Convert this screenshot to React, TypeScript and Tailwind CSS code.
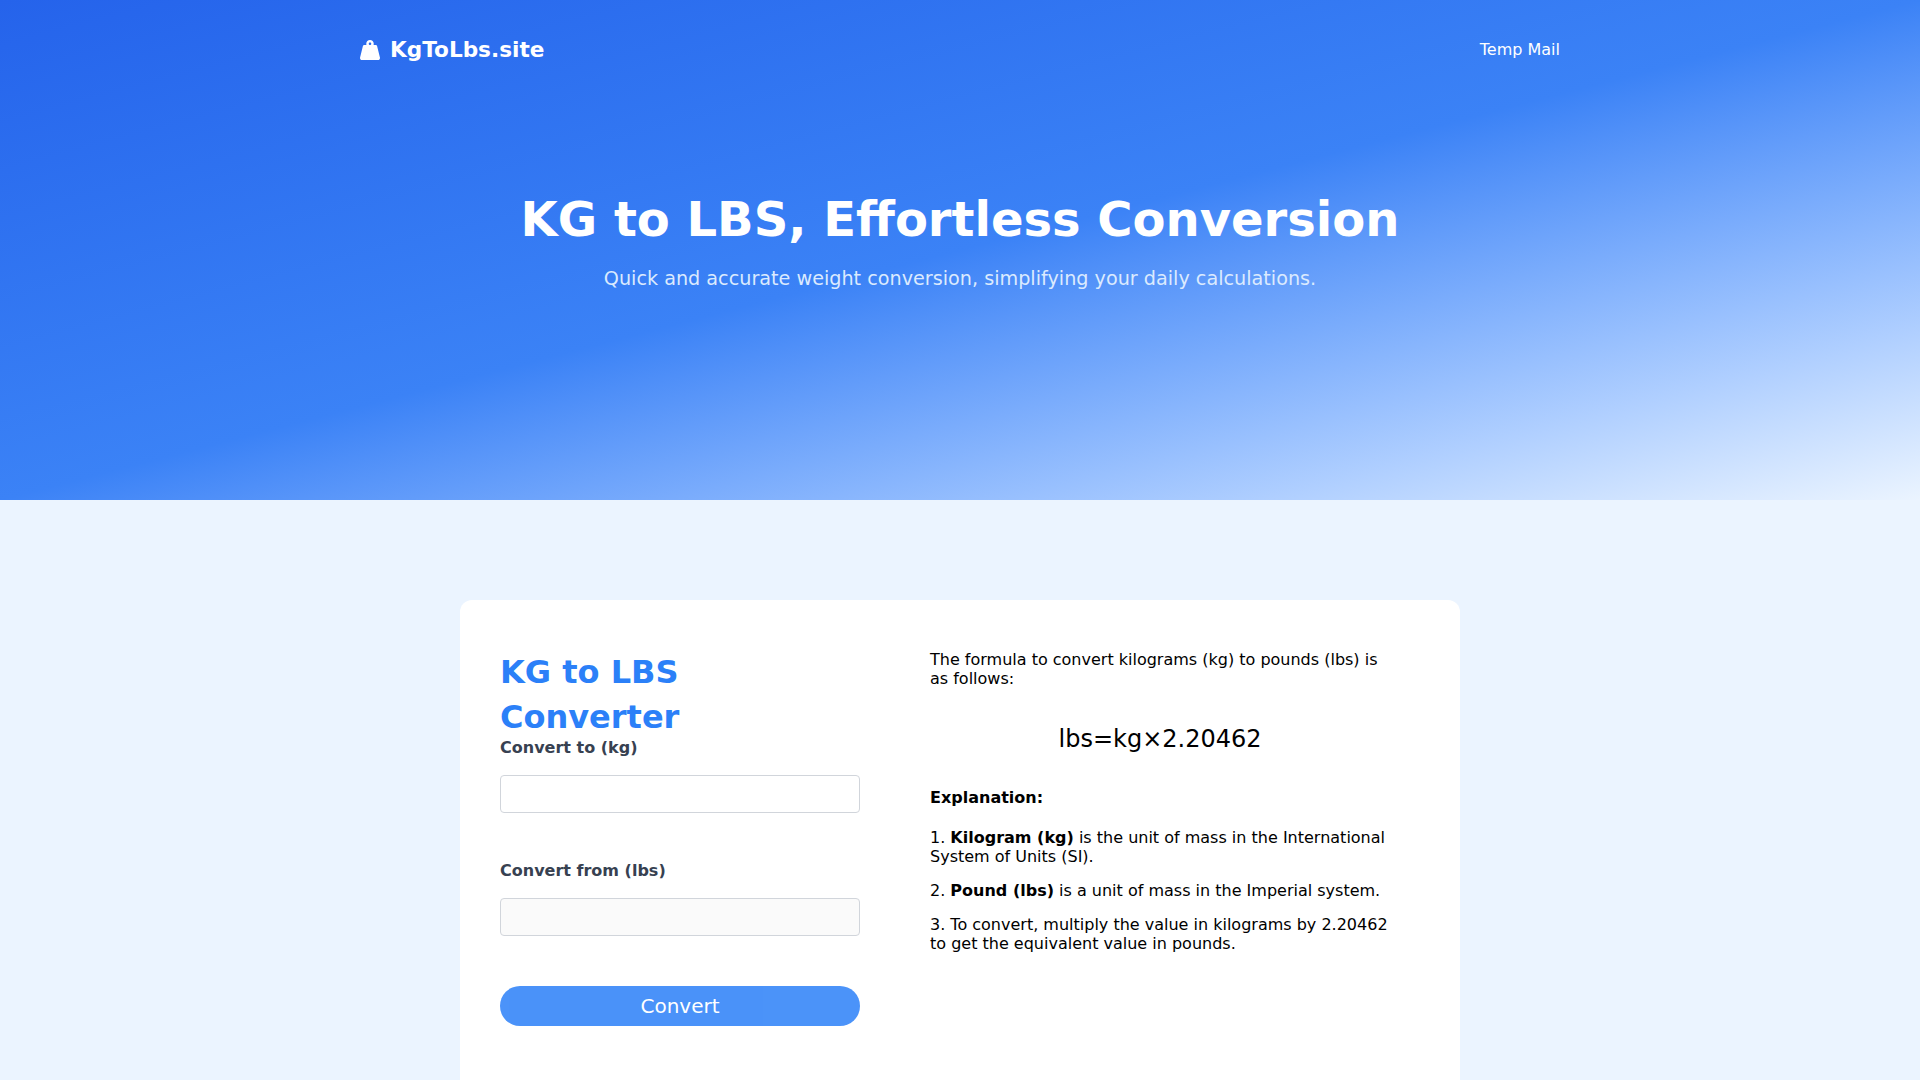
import { FaWeightHanging } from 'react-icons/fa';

export default function App() {
  return (
    <div className="h-screen overflow-hidden bg-[#ebf4ff] font-['DejaVu_Sans',sans-serif]">
      <header className="h-[500px] bg-gradient-to-br from-[#2563eb] via-[#3b82f6] to-[#ebf4ff]">
        <nav className="w-[1200px] mx-auto pt-[37px] flex justify-between items-center text-white">
          <a className="flex items-center gap-[10px] text-[21.6px] leading-[26px] font-bold">
            <FaWeightHanging className="w-5 h-5" />
            KgToLbs.site
          </a>
          <a className="text-base">Temp Mail</a>
        </nav>
        <div className="text-center text-white mt-[126px]">
          <h1 className="text-5xl leading-[60px] font-bold">KG to LBS, Effortless Conversion</h1>
          <p className="mt-4 text-[19.2px] leading-7 text-[#dbeafe]">
            Quick and accurate weight conversion, simplifying your daily calculations.
          </p>
        </div>
      </header>

      <main className="w-[1000px] mx-auto mt-[100px] bg-white rounded-xl flex h-[600px]">
        <section className="w-[440px] pt-[50px] px-10">
          <h2 className="text-[32px] leading-[45px] -mb-[2px] font-bold text-[#2b80f8]">KG to LBS Converter</h2>
          <label className="block text-base leading-5 font-bold text-[#374151]">Convert to (kg)</label>
          <input type="text" className="block w-full h-[38px] mt-[17px] bg-white border border-[#d1d5db] rounded" />
          <label className="block text-base leading-5 font-bold text-[#374151] mt-[48px]">Convert from (lbs)</label>
          <input type="text" disabled className="block w-full h-[38px] mt-[17px] bg-[#fafafa] border border-[#d1d5db] rounded" />
          <button className="block w-full h-10 mt-[50px] rounded-full bg-[#2b80f8] opacity-[0.85] text-white text-xl">Convert</button>
        </section>
        <section className="flex-1 pl-[30px] pr-[70px] pt-[50px] text-base leading-[19px] text-black">
          <p>The formula to convert kilograms (kg) to pounds (lbs) is as follows:</p>
          <p className="text-2xl leading-7 text-center mt-[37px]">lbs=kg×2.20462</p>
          <p className="font-bold mt-[35px]">Explanation:</p>
          <p className="mt-[21px]">1. <b>Kilogram (kg)</b> is the unit of mass in the International System of Units (SI).</p>
          <p className="mt-[15px]">2. <b>Pound (lbs)</b> is a unit of mass in the Imperial system.</p>
          <p className="mt-[15px]">3. To convert, multiply the value in kilograms by 2.20462 to get the equivalent value in pounds.</p>
        </section>
      </main>
    </div>
  );
}
